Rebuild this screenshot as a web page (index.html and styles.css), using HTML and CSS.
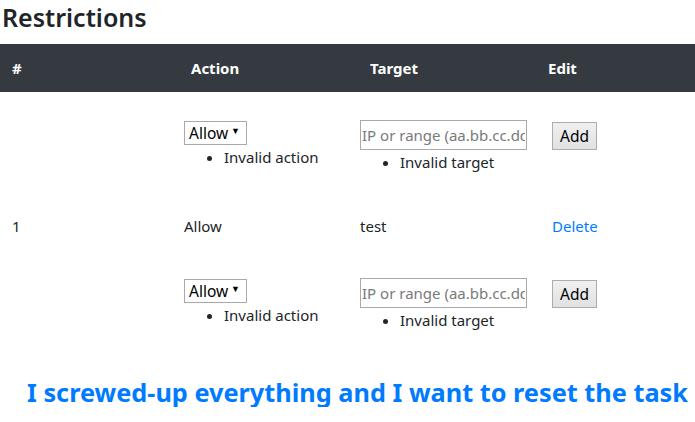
FILE: index.html
```html
<!DOCTYPE html>
<html>
<head>
<meta charset="utf-8">
<link rel="stylesheet" href="styles.css">
</head>
<body>
<h3 class="title">Restrictions</h3>
<table class="table">
  <colgroup>
    <col class="c1"><col class="c2"><col class="c3"><col class="c4">
  </colgroup>
  <thead>
    <tr>
      <th class="th-num">#</th>
      <th class="th-action">Action</th>
      <th class="th-target">Target</th>
      <th class="th-edit">Edit</th>
    </tr>
  </thead>
  <tbody>
    <tr class="form-row">
      <td></td>
      <td>
        <div class="field">
          <span class="select"><span class="select-text">Allow</span><span class="arrow">▼</span></span>
          <ul class="errors"><li>Invalid action</li></ul>
        </div>
      </td>
      <td>
        <div class="field field-input">
          <input class="input" type="text" placeholder="IP or range (aa.bb.cc.dd/ee)">
          <ul class="errors"><li>Invalid target</li></ul>
        </div>
      </td>
      <td>
        <div class="field field-btn"><button class="btn">Add</button></div>
      </td>
    </tr>
    <tr class="data-row">
      <td>1</td>
      <td>Allow</td>
      <td>test</td>
      <td><a class="link" href="#">Delete</a></td>
    </tr>
    <tr class="form-row">
      <td></td>
      <td>
        <div class="field">
          <span class="select"><span class="select-text">Allow</span><span class="arrow">▼</span></span>
          <ul class="errors"><li>Invalid action</li></ul>
        </div>
      </td>
      <td>
        <div class="field field-input">
          <input class="input" type="text" placeholder="IP or range (aa.bb.cc.dd/ee)">
          <ul class="errors"><li>Invalid target</li></ul>
        </div>
      </td>
      <td>
        <div class="field field-btn"><button class="btn">Add</button></div>
      </td>
    </tr>
  </tbody>
</table>
<h3 class="reset">I screwed-up everything and I want to reset the task</h3>
</body>
</html>
```
FILE: styles.css
```css
* { box-sizing: border-box; }
body {
  margin: 0;
  font-family: "Noto Sans", "Open Sans", sans-serif;
  font-size: 15px;
  line-height: 24px;
  color: #212529;
  background: #fff;
  overflow: hidden;
}
.title {
  margin: 0 0 9px 2px;
  font-size: 25px;
  font-weight: 600;
  line-height: 35px;
  color: #212529;
}
.table {
  width: 695px;
  border-collapse: collapse;
  table-layout: fixed;
}
.c1 { width: 172px; }
.c2 { width: 176px; }
.c3 { width: 192px; }
.c4 { width: 155px; }
thead th {
  background: #343a40;
  color: #fff;
  font-weight: 700;
  text-align: left;
  padding: 12px;
  height: 48px;
}
.th-action { padding-left: 19px; }
.th-target { padding-left: 22px; }
.th-edit { padding-left: 8px; }
td {
  padding: 12px;
  vertical-align: top;
}
.form-row td { height: 110px; }
.data-row td { height: 48px; }
.field { padding-top: 17px; }
.field-input { padding-top: 16px; }
.field-btn { padding-top: 18px; }
.select {
  position: relative;
  display: inline-block;
  height: 24px;
  width: 63px;
  border: 1px solid #a9a9a9;
  background: #fff;
  font-size: 15.5px;
  line-height: 22px;
  padding-left: 4px;
  vertical-align: top;
}
.select-text { color: #000; }
.arrow {
  position: absolute;
  right: 6px;
  top: -2px;
  font-size: 9px;
  color: #000;
}
.errors {
  margin: 0 0 16px 0;
  padding-left: 40px;
  line-height: 24px;
}
.input {
  display: block;
  width: 167px;
  height: 30px;
  border: 1px solid #a9a9a9;
  padding: 0 1px;
  font-family: inherit;
  font-size: 15px;
  color: #212529;
  background: #fff;
  outline: none;
}
.input::placeholder { color: #7a7a7a; }
.btn {
  height: 28px;
  width: 45px;
  padding: 0;
  font-family: inherit;
  font-size: 15.5px;
  color: #000;
  background: linear-gradient(#f0f0f0, #e1e1e1);
  border: 1px solid #adadad;
  border-radius: 0;
}
.link {
  color: #007bff;
  text-decoration: none;
}
.reset {
  margin: 17px 0 0 0;
  padding-left: 27px;
  font-size: 25.3px;
  font-weight: 700;
  line-height: 30px;
  color: #007bff;
}
```
